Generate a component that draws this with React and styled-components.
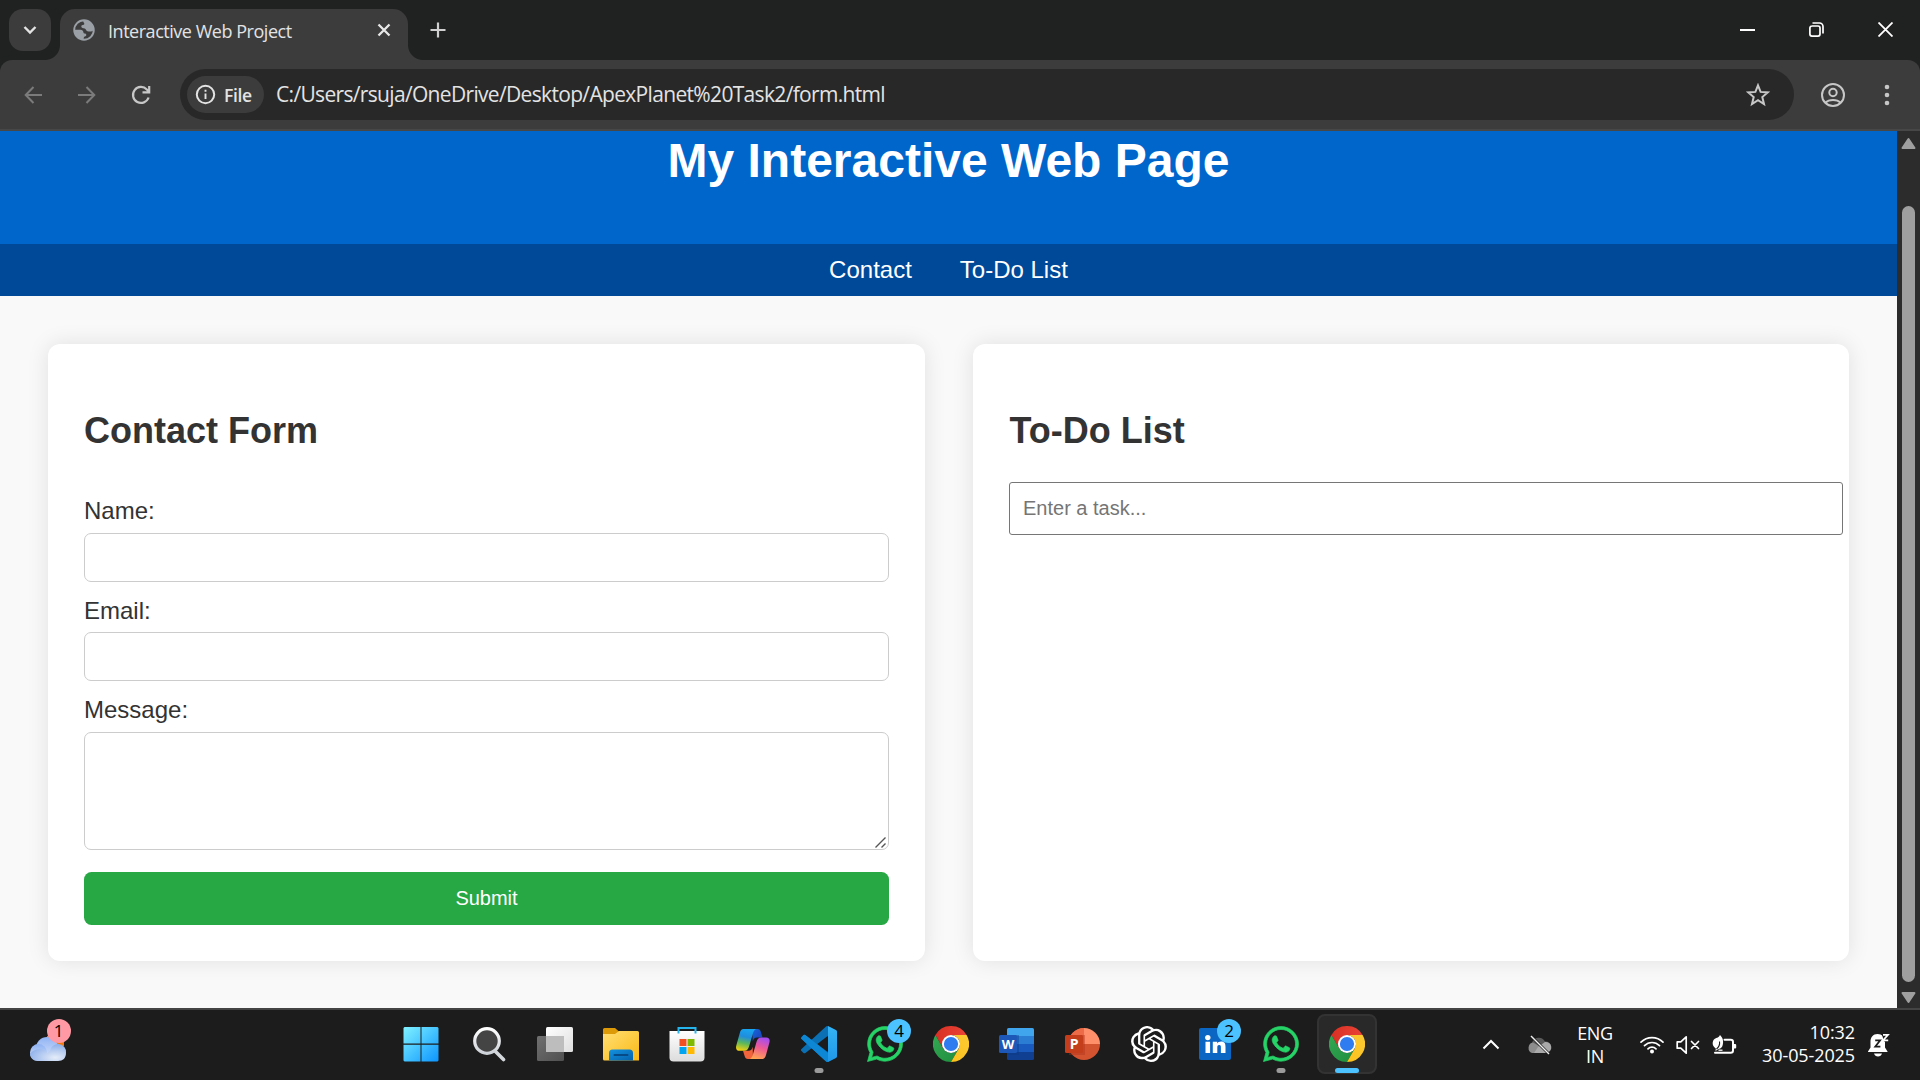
import React from "react";
import styled, { createGlobalStyle, css } from "styled-components";
import { FaWhatsapp } from "react-icons/fa";
import { SiOpenai } from "react-icons/si";

const UI = `"Open Sans", "Noto Sans", sans-serif`;
const ARIAL = `"Liberation Sans", Arial, sans-serif`;

const GlobalStyle = createGlobalStyle`
  *, *::before, *::after { box-sizing: border-box; }
  html, body { margin: 0; background: #202221; overflow: hidden; }
  svg { display: block; flex: none; }
`;

const Screen = styled.div`
  width: 1920px;
  height: 1080px;
  display: flex;
  flex-direction: column;
  background: #202221;
  font-family: ${UI};
  overflow: hidden;
`;

/* ---------- tab strip ---------- */
const TabStrip = styled.div`
  height: 60px;
  display: flex;
  align-items: flex-start;
  padding: 9px 0 0 9px;
`;
const TabSearch = styled.div`
  width: 42px;
  height: 42px;
  border-radius: 14px;
  background: #3c3c3c;
  display: grid;
  place-items: center;
`;
const Tab = styled.div`
  position: relative;
  width: 348px;
  height: 51px;
  margin-left: 9px;
  padding: 0 12px 9px 13px;
  border-radius: 15px 15px 0 0;
  background: #3c3c3c;
  display: flex;
  align-items: center;
  &::before, &::after {
    content: "";
    position: absolute;
    bottom: 0;
    width: 15px;
    height: 15px;
  }
  &::before {
    left: -15px;
    background: radial-gradient(circle at 0 0, transparent 14.5px, #3c3c3c 15.5px);
  }
  &::after {
    right: -15px;
    background: radial-gradient(circle at 100% 0, transparent 14.5px, #3c3c3c 15.5px);
  }
`;
const TabTitle = styled.span`
  flex: 1;
  margin: 2px 0 0 13px;
  font-size: 18px;
  line-height: 24px;
  letter-spacing: -0.47px;
  white-space: nowrap;
  color: #e3e3e3;
`;
const NewTab = styled.div`
  width: 42px;
  height: 42px;
  margin-left: 9px;
  display: grid;
  place-items: center;
`;
const WindowButtons = styled.div`
  display: flex;
  margin: -9px 0 0 auto;
`;
const WindowButton = styled.div`
  width: 69px;
  height: 59px;
  display: grid;
  place-items: center;
`;

/* ---------- toolbar ---------- */
const Toolbar = styled.div`
  height: 71px;
  padding: 9px 18px 9px 15px;
  border-radius: 12px 12px 0 0;
  border-bottom: 2px solid #474747;
  background: #3c3c3c;
  display: flex;
  align-items: center;
`;
const NavButton = styled.div`
  width: 36px;
  height: 42px;
  margin-right: ${(p) => p.$gap}px;
  display: grid;
  place-items: center;
`;
const Omnibox = styled.div`
  flex: 1;
  height: 51px;
  padding: 0 24px 0 7px;
  border-radius: 26px;
  background: #282828;
  display: flex;
  align-items: center;
`;
const SchemeChip = styled.div`
  width: 77px;
  height: 37px;
  padding-left: 8px;
  border-radius: 19px;
  background: #3c3c3c;
  display: flex;
  align-items: center;
  gap: 8px;
  font-size: 17.5px;
  font-weight: 600;
  letter-spacing: -0.4px;
  color: #e3e3e3;
`;
const Url = styled.span`
  flex: 1;
  margin-left: 12px;
  padding-bottom: 1px;
  font-size: 21px;
  letter-spacing: -0.67px;
  white-space: nowrap;
  color: #e3e3e3;
`;
const ToolbarIcon = styled.div`
  width: ${(p) => p.$w}px;
  display: grid;
  place-items: center;
`;

/* ---------- page ---------- */
const Viewport = styled.div`
  height: 877px;
  display: flex;
  background: #f9f9f9;
`;
const Page = styled.div`
  width: 1897px;
  font-family: ${ARIAL};
  color: #333;
`;
const Header = styled.header`
  height: 113px;
  background: #0066cc;
  text-align: center;
`;
const Title = styled.h1`
  margin: 0;
  padding-top: 2px;
  font-size: 48px;
  line-height: 55px;
  color: #fff;
`;
const Nav = styled.nav`
  height: 52px;
  background: #004999;
  display: flex;
  justify-content: center;
  gap: 48px;
`;
const NavLink = styled.a`
  padding-top: 12px;
  font-size: 24px;
  line-height: 27px;
  color: #fff;
`;
const Main = styled.main`
  display: grid;
  grid-template-columns: 877px 876px;
  gap: 48px;
  padding: 48px;
`;
const Card = styled.section`
  height: 617px;
  min-width: 0;
  padding: 36px;
  border-radius: 12px;
  background: #fff;
  box-shadow: 0 0 22px rgba(0, 0, 0, 0.1);
`;
const CardTitle = styled.h2`
  margin: 30px 0 31px;
  padding-left: ${(p) => p.$inset || 0}px;
  font-size: 36px;
  line-height: 41px;
`;
const Form = styled.form`
  display: flex;
  flex-direction: column;
  padding-top: 15.4px;
`;
const Label = styled.label`
  height: 35.5px;
  font-size: 24px;
  line-height: 27px;
`;
const fieldBox = css`
  display: block;
  width: 100%;
  border: 1px solid #ccc;
  border-radius: 7px;
  background: #fff;
  outline: none;
`;
const Field = styled.input`
  ${fieldBox}
  height: 49px;
  margin: 0 0 15px;
`;
const AreaWrap = styled.div`
  position: relative;
  height: 118px;
`;
const Area = styled.textarea`
  ${fieldBox}
  height: 118px;
  resize: none;
`;
const Grip = styled.svg`
  position: absolute;
  right: 3px;
  bottom: 2px;
`;
const Submit = styled.button`
  height: 53px;
  margin: 22px 0 0;
  border: 0;
  border-radius: 7.5px;
  background: #28a745;
  color: #fff;
  font: 20px ${ARIAL};
`;
const TaskInput = styled.input`
  display: block;
  width: 834px;
  height: 53px;
  padding: 0 13px;
  border: 1px solid #767676;
  border-radius: 3px;
  outline: none;
  font: 20px ${ARIAL};
  &::placeholder { color: #757575; opacity: 1; }
`;
const Scrollbar = styled.div`
  width: 23px;
  padding: 6px 0 3px;
  background: #2c2c2c;
  display: flex;
  flex-direction: column;
  align-items: center;
`;
const Thumb = styled.div`
  width: 13px;
  height: 776px;
  margin: 56px 0 9px;
  border-radius: 7px;
  background: #9f9f9f;
`;

/* ---------- taskbar ---------- */
const Taskbar = styled.div`
  height: 72px;
  border-top: 2px solid #444;
  background: #1c1c1c;
  display: flex;
`;
const Widgets = styled.div`
  width: 390px;
  padding: 17px 0 0 30px;
`;
const IconWrap = styled.div`
  position: relative;
  width: 36px;
  height: 36px;
`;
const Badge = styled.span`
  position: absolute;
  left: ${(p) => p.$x}px;
  top: ${(p) => p.$y}px;
  width: 24px;
  height: 24px;
  border-radius: 50%;
  background: ${(p) => p.$color};
  color: #000;
  font-size: 17px;
  line-height: 24px;
  text-align: center;
`;
const Apps = styled.div`
  display: flex;
  padding-top: 4px;
`;
const AppCell = styled.div`
  position: relative;
  width: 60px;
  height: 60px;
  margin: 0 3px;
  border-radius: 8px;
  display: grid;
  place-items: center;
  &:first-child { margin: 0 5px 0 1px; }
  ${(p) => p.$active && css`
    background: #292929;
    border: 2px solid #333;
  `}
`;
const Running = styled.i`
  position: absolute;
  left: 50%;
  bottom: ${(p) => (p.$active ? -1 : 1)}px;
  width: ${(p) => (p.$active ? 24 : 9)}px;
  height: 5px;
  border-radius: 3px;
  transform: translateX(-50%);
  background: ${(p) => (p.$active ? "#4cc2ff" : "#9a9a9a")};
`;
const WhatsAppIcon = styled(FaWhatsapp)`
  width: 40px;
  height: 40px;
  margin: -2px -2.5px;
  color: #25d366;
  stroke: #25d366;
  stroke-width: 9px;
`;
const Tray = styled.div`
  flex: 1;
  height: 69px;
  display: flex;
  align-items: center;
  padding-left: 102px;
  color: #fff;
  font-size: 18px;
  line-height: 23.5px;
`;
const TrayIcon = styled.div`
  width: ${(p) => p.$w}px;
  margin-right: ${(p) => p.$gap}px;
  display: grid;
  place-items: center;
`;
const Language = styled.div`
  width: 36px;
  margin-right: 27px;
  text-align: center;
  letter-spacing: -0.4px;
  padding-top: 1px;
`;
const Clock = styled.div`
  width: 117px;
  text-align: right;
  letter-spacing: -0.1px;
  margin-right: 13px;
  padding-bottom: 1px;
`;

const Line = ({ w, h, d, color = "#fff", sw = 2, ...rest }) => (
  <svg width={w} height={h} viewBox={`0 0 ${w} ${h}`} fill="none" stroke={color} strokeWidth={sw} {...rest}>
    <path d={d} />
  </svg>
);

const Globe = () => (
  <svg width="22" height="22" viewBox="0 0 22 22">
    <circle cx="11" cy="11" r="9.8" fill="#3c3c3c" stroke="#9aa0a6" strokeWidth="1.9" />
    <path fill="#9aa0a6" d="M10.500 1C16 .800 20.500 5.500 20.800 11c-1.600 1.600-4 2-6.300 1.200-1.500-.500-1.600-2.200-2.800-2.700-1.500-.600-3.200-.300-3.400-1.700-.200-1.500 1.200-1.700 2.400-2 .700-.300.800-1.200.300-1.900-.600-.900-1.200-1.800-.5-2.900z" />
    <path fill="#9aa0a6" d="M1.200 10.800h6.300c1.800 0 2.700.900 2.900 2.500.1.900.6 1.200 1.500 1.200 1.200.1 1.500.900 1.300 1.900-.200.800-1.300.900-1.900 1.400-.700.700-.400 1.900-.900 3C5.500 20.500 1.500 16 1.200 10.800z" />
  </svg>
);

const Weather = () => (
  <svg width="38" height="36" viewBox="0 0 38 36">
    <defs>
      <linearGradient id="cl1" x1="0" y1="0" x2="0" y2="1"><stop stopColor="#8fb2f5" /><stop offset="1" stopColor="#d8e4f8" /></linearGradient>
      <radialGradient id="cl2" cx=".7" cy=".8" r=".8"><stop stopColor="#e4ecf8" /><stop offset="1" stopColor="#8caeea" /></radialGradient>
    </defs>
    <path d="M17 9h17v10H17z" fill="#f47a10" />
    <circle cx="17" cy="21" r="11" fill="url(#cl1)" />
    <circle cx="8.500" cy="25.500" r="8.500" fill="url(#cl1)" />
    <path d="M20 24a8 8 0 0 1 16 2c0 5-3 8-8 8H8c-5 0-8-3.500-8-7 4-6 14-6 17-1z" fill="url(#cl2)" />
  </svg>
);

const WindowsLogo = () => (
  <svg width="36" height="36" viewBox="0 0 36 36">
    <defs>
      <linearGradient id="win" gradientUnits="userSpaceOnUse" x1="0" y1="0" x2="36" y2="36">
        <stop stopColor="#84f4ff" /><stop offset=".5" stopColor="#46c4ff" /><stop offset="1" stopColor="#0b93ff" />
      </linearGradient>
    </defs>
    <path fill="url(#win)" d="M1.500 1H17.500V17.500H.500V2zM18.500 1H34.500L35.500 2V17.500H18.500zM.500 18.700H17.500V35.500H1.500L.500 34.500zM18.500 18.700H35.500V34.500L34.500 35.500H18.500z" />
  </svg>
);

const SearchIcon = () => (
  <svg width="36" height="36" viewBox="0 0 36 36">
    <defs><linearGradient id="sr" x1="0" y1="0" x2="0" y2="1"><stop stopColor="#fff" /><stop offset="1" stopColor="#cdd2d8" /></linearGradient></defs>
    <path d="M23 24L32.500 33.500" stroke="#d4d8dc" strokeWidth="3.600" strokeLinecap="round" />
    <circle cx="16" cy="15" r="12.300" fill="#444" stroke="url(#sr)" strokeWidth="3.200" />
  </svg>
);

const TaskView = () => (
  <svg width="36" height="36" viewBox="0 0 36 36">
    <defs>
      <linearGradient id="tv1" x1="0" y1="0" x2="1" y2="1"><stop stopColor="#fff" /><stop offset="1" stopColor="#dedede" /></linearGradient>
      <linearGradient id="tv2" x1="0" y1="0" x2="1" y2="1"><stop stopColor="#707070" /><stop offset="1" stopColor="#505050" /></linearGradient>
    </defs>
    <rect x="0" y="10" width="27" height="25" rx="1.500" fill="url(#tv2)" />
    <rect x="9" y="1" width="27" height="25" rx="1.500" fill="url(#tv1)" />
    <path d="M9 10h18v16H10.500a1.500 1.500 0 0 1-1.500-1.500z" fill="#bdbdbd" />
  </svg>
);

const Explorer = () => (
  <svg width="36" height="36" viewBox="0 0 36 36">
    <defs>
      <linearGradient id="ex1" x1="0" y1="0" x2="1" y2="1"><stop stopColor="#ffdf74" /><stop offset="1" stopColor="#fbb915" /></linearGradient>
      <linearGradient id="ex2" x1="0" y1="0" x2="1" y2="1"><stop stopColor="#1492e0" /><stop offset="1" stopColor="#0562ac" /></linearGradient>
    </defs>
    <path d="M0 3.500A1.500 1.500 0 0 1 1.500 2H12l4 3.500V9H0z" fill="#dd9a08" />
    <path d="M0 8h12l4-3h18.500A1.500 1.500 0 0 1 36 6.500V34.500H1.500A1.500 1.500 0 0 1 0 33z" fill="url(#ex1)" />
    <path d="M6 34.500V27a3.500 3.500 0 0 1 3.500-3.500h17A3.500 3.500 0 0 1 30 27v7.500z" fill="url(#ex2)" />
    <path d="M11.500 29h13" stroke="#064a87" strokeWidth="2" strokeLinecap="round" />
  </svg>
);

const Store = () => (
  <svg width="36" height="36" viewBox="0 0 36 36">
    <defs><linearGradient id="st" x1="0" y1="0" x2="0" y2="1"><stop stopColor="#fff" /><stop offset="1" stopColor="#dcdcdc" /></linearGradient></defs>
    <path d="M.500 5h35v26.500a4 4 0 0 1-4 4h-27a4 4 0 0 1-4-4z" fill="url(#st)" />
    <path d="M9.500 7.500V2h17v5.500" fill="none" stroke="#25b4ec" strokeWidth="2" />
    <path d="M10.500 13h7v7h-7z" fill="#f25022" /><path d="M18.500 13h7v7h-7z" fill="#7fba00" />
    <path d="M10.500 21h7v7h-7z" fill="#00a4ef" /><path d="M18.500 21h7v7h-7z" fill="#ffb900" />
  </svg>
);

const Copilot = () => (
  <svg width="36" height="36" viewBox="0 0 36 36">
    <defs>
      <linearGradient id="cp1" x1=".5" y1="0" x2=".3" y2="1"><stop stopColor="#18a4f0" /><stop offset=".35" stopColor="#1f8ddc" /><stop offset=".65" stopColor="#5cb85a" /><stop offset="1" stopColor="#f5d010" /></linearGradient>
      <linearGradient id="cp2" x1=".6" y1="0" x2=".3" y2="1"><stop stopColor="#a64df0" /><stop offset=".45" stopColor="#ee5a94" /><stop offset="1" stopColor="#ffa650" /></linearGradient>
      <linearGradient id="cp3" x1="0" y1="0" x2="1" y2="1"><stop stopColor="#1767d8" /><stop offset="1" stopColor="#1a3bb8" /></linearGradient>
    </defs>
    <path d="M17 3h5.500c2 0 2.800 1.300 3.400 3l1.600 5.500H22c-2.500 0-3.500 1.500-4.200 4z" fill="url(#cp3)" />
    <path d="M18 33h-5c-2 0-2.800-1.200-3.400-3L8 24.800h5.500c2.500 0 3.500-1.500 4.200-4z" fill="#f2643c" />
    <path d="M8.500 3h13c-2 .4-2.800 2-3.500 4.200L14.200 20c-.9 3-2 4.800-4.700 4.800H4.500C1.500 24.800.5 22.500 1.300 19.500L4.800 7C5.500 4.500 6.500 3 8.500 3z" fill="url(#cp1)" />
    <path d="M27.200 33H14.500c1.800-.4 2.600-2 3.300-4.200L21.500 16c.9-3 2-4.500 4.700-4.500h5c3 0 4 2.200 3.200 5L31 29c-.8 2.500-1.800 4-3.800 4z" fill="url(#cp2)" />
  </svg>
);

const VSCode = () => (
  <svg width="36" height="36" viewBox="0 0 24 24">
    <defs>
      <linearGradient id="vs1" x1="0" y1="0" x2="0" y2="1"><stop stopColor="#35b4f5" /><stop offset="1" stopColor="#1f97e8" /></linearGradient>
      <clipPath id="vsc"><path d="M23.150 2.587L18.210.210a1.494 1.494 0 0 0-1.705.290l-9.460 8.630-4.120-3.128a.999.999 0 0 0-1.276.057L.327 7.261A1 1 0 0 0 .326 8.740L3.899 12 .326 15.260a1 1 0 0 0 .001 1.479L1.650 17.940a.999.999 0 0 0 1.276.057l4.120-3.128 9.460 8.630a1.492 1.492 0 0 0 1.704.290l4.942-2.377A1.500 1.500 0 0 0 24 20.060V3.939a1.500 1.500 0 0 0-.850-1.352zm-5.146 14.861L10.826 12l7.178-5.448v10.896z" /></clipPath>
    </defs>
    <g clipPath="url(#vsc)">
      <path d="M0 0h24v24H0z" fill="#0b70b4" />
      <path d="M0 8.500L2 5l5 4.100L18 18v6h-1.500L3.900 12z" fill="#0d86d4" />
      <path d="M18 0h6v24h-6z" fill="url(#vs1)" />
    </g>
  </svg>
);

const Chrome = () => (
  <svg width="36" height="36" viewBox="0 0 36 36">
    <defs>
      <linearGradient id="cr" x1="0" y1="0" x2="1" y2="0"><stop stopColor="#d93025" /><stop offset="1" stopColor="#ea4335" /></linearGradient>
      <linearGradient id="cg" x1="0" y1="0" x2="1" y2="1"><stop stopColor="#34a853" /><stop offset="1" stopColor="#1e8e3e" /></linearGradient>
      <linearGradient id="cy" x1="1" y1="0" x2="0" y2="1"><stop stopColor="#fbc934" /><stop offset="1" stopColor="#fcc21c" /></linearGradient>
    </defs>
    <path d="M18 9h15.590A18 18 0 0 0 2.410 9l7.800 13.500z" fill="url(#cr)" />
    <path d="M25.790 22.500L18 36A18 18 0 0 1 2.410 9l7.800 13.500A9 9 0 0 0 25.790 22.500z" fill="url(#cg)" />
    <path d="M18 9h15.590A18 18 0 0 1 18 36l7.790-13.500A9 9 0 0 0 18 9z" fill="url(#cy)" />
    <circle cx="18" cy="18" r="9" fill="#fff" />
    <circle cx="18" cy="18" r="7.100" fill="#2f7bf0" />
  </svg>
);

const Letter = styled.text`
  font-family: ${UI};
  font-weight: 700;
  fill: #fff;
  text-anchor: middle;
`;

const Word = () => (
  <svg width="36" height="36" viewBox="0 0 36 36">
    <path d="M8 3.500A1.500 1.500 0 0 1 9.500 2h24A1.500 1.500 0 0 1 35 3.500V10H8z" fill="#41a5ee" />
    <path d="M8 10h27v8H8z" fill="#2b7cd3" />
    <path d="M8 18h27v8H8z" fill="#185abd" />
    <path d="M8 26h27v6.500a1.500 1.500 0 0 1-1.500 1.500h-24A1.500 1.500 0 0 1 8 32.500z" fill="#103f91" />
    <rect x="8" y="9" width="12" height="20" fill="#0c3880" opacity=".4" />
    <rect x="0" y="9" width="18" height="18" rx="1.500" fill="#1d57b8" />
    <Letter x="9" y="22.800" fontSize="13">W</Letter>
  </svg>
);

const PowerPoint = () => (
  <svg width="36" height="36" viewBox="0 0 36 36">
    <path d="M19 18V2A16 16 0 0 0 3 18a16 16 0 0 0 16 16 16 16 0 0 0 16-16z" fill="#d35230" />
    <path d="M19 2A16 16 0 0 0 3 18h16z" fill="#ed6c47" />
    <path d="M19 2a16 16 0 0 1 16 16H19z" fill="#ff8f6b" />
    <rect x="4" y="9" width="16" height="20" fill="#a8321a" opacity=".4" />
    <rect x="0" y="9" width="18" height="18" rx="1.500" fill="#c43e1c" />
    <Letter x="9.200" y="22.800" fontSize="14">P</Letter>
  </svg>
);

const LinkedIn = () => (
  <svg width="36" height="36" viewBox="0 0 36 36">
    <rect x="2" y="2" width="32" height="32" rx="2" fill="#0a66c2" />
    <circle cx="10.800" cy="11.600" r="2.700" fill="#fff" />
    <path d="M8.500 15.800h4.600V27H8.500zM15.800 15.800h4.400v1.600c.8-1.200 2.100-1.900 3.900-1.900 3.700 0 4.400 2.400 4.400 5.400V27h-4.600v-5.400c0-1.300 0-2.500-1.700-2.500s-1.900 1.200-1.900 2.500V27h-4.500z" fill="#fff" />
  </svg>
);

const CloudOff = () => (
  <svg width="26" height="20" viewBox="0 0 26 20">
    <path d="M6 8a7 7 0 0 1 13-1.500A5.500 5.500 0 0 1 25 12l-10 2z" fill="#5a5a5a" />
    <path d="M7 7.500a5.500 5.500 0 0 0-1 10.500h13l-6-7z" fill="#8d8d8d" />
    <path d="M12 12l7-5a5.300 5.300 0 0 1 1.500 11H8z" fill="#a9a9a9" />
    <path d="M5 1l18 18" stroke="#1c1c1c" strokeWidth="2.600" />
    <path d="M5 1l18 18" stroke="#f0f0f0" strokeWidth="1.500" />
  </svg>
);

const Wifi = () => (
  <svg width="24" height="18" viewBox="0 0 24 18" fill="none" stroke="#fff" strokeWidth="1.700" strokeLinecap="round">
    <path d="M1 6.200a15.600 15.600 0 0 1 22 0M4.500 9.600a10.600 10.600 0 0 1 15 0M8 12.800a5.700 5.700 0 0 1 8 0" />
    <circle cx="12" cy="15.500" r="2" fill="#fff" stroke="none" />
  </svg>
);

const Muted = () => (
  <svg width="24" height="20" viewBox="0 0 24 20" fill="none" stroke="#fff" strokeWidth="1.700" strokeLinejoin="round" strokeLinecap="round">
    <path d="M1.200 6.800h3.600L10.200 1.800v16.400L4.800 13.200H1.200zM15.500 6.500l7 7M22.500 6.500l-7 7" />
  </svg>
);

const Battery = () => (
  <svg width="25" height="20" viewBox="0 0 25 20" fill="none">
    <path d="M12.500 4.700h6.300a2.200 2.200 0 0 1 2.200 2.200v8.700a2.200 2.200 0 0 1-2.200 2.200H3" stroke="#fff" strokeWidth="2" strokeLinecap="round" />
    <path d="M22 9h1.200a1 1 0 0 1 1 1v2.600a1 1 0 0 1-1 1H22z" fill="#fff" />
    <path d="M8 0c3 3 3.500 6 2.800 9.500-.4 2.300-1.600 4.300-4.300 4.500L3.500 16l.3-2.500C-.500 11 .200 6 2.500 4 5 2.500 7 2.500 8 0z" fill="#fff" />
    <path d="M7.500 6.500c.6 3.500-.5 5.500-3 7.500" stroke="#1c1c1c" strokeWidth="1.100" />
    <path d="M6.500 15.200h4" stroke="#fff" strokeWidth="1.300" />
  </svg>
);

const Bell = () => (
  <svg width="22" height="24" viewBox="0 0 22 24">
    <path d="M9.500 1C5 1 2.500 4.500 2.500 8.500v6L0 18.500V19h19.500v-.5L17 14.500v-6C17 4.500 14 1 9.500 1z" fill="#fff" />
    <path d="M6 20.500h8c-.6 1.900-2 3-4 3s-3.400-1.100-4-3z" fill="#fff" />
    <path d="M13.500 0h8.500v8.500h-6z" fill="#1c1c1c" />
    <path d="M7.200 7.300h5l-5 6.400h5.200" fill="none" stroke="#1c1c1c" strokeWidth="1.700" />
    <path d="M15 1.800h5l-5 5.600h5.200" fill="none" stroke="#fff" strokeWidth="1.700" />
  </svg>
);

const apps = [
  { id: "start", icon: <WindowsLogo /> },
  { id: "search", icon: <SearchIcon /> },
  { id: "taskview", icon: <TaskView /> },
  { id: "explorer", icon: <Explorer /> },
  { id: "store", icon: <Store /> },
  { id: "copilot", icon: <Copilot /> },
  { id: "vscode", icon: <VSCode />, running: true },
  { id: "whatsapp", icon: <WhatsAppIcon />, badge: "4" },
  { id: "chrome", icon: <Chrome /> },
  { id: "word", icon: <Word /> },
  { id: "powerpoint", icon: <PowerPoint /> },
  { id: "chatgpt", icon: <SiOpenai size={36} color="#fff" /> },
  { id: "linkedin", icon: <LinkedIn />, badge: "2" },
  { id: "whatsapp-2", icon: <WhatsAppIcon />, running: true },
  { id: "chrome-active", icon: <Chrome />, running: true, active: true },
];

export default function App() {
  return (
    <Screen>
      <GlobalStyle />
      <TabStrip>
        <TabSearch><Line w={16} h={10} sw={2.4} color="#e3e3e3" d="M2.500 2L8 7.500L13.500 2" /></TabSearch>
        <Tab>
          <Globe />
          <TabTitle>Interactive Web Project</TabTitle>
          <Line w={24} h={24} sw={2.3} color="#e8e8e8" d="M6.500 6.500L17.500 17.500M17.500 6.500L6.500 17.500" />
        </Tab>
        <NewTab><Line w={16} h={16} sw={2.2} color="#d0d0d0" d="M8 .5V15.500M.5 8H15.500" /></NewTab>
        <WindowButtons>
          <WindowButton><Line w={15} h={2} sw={2} d="M0 1H15" /></WindowButton>
          <WindowButton>
            <Line w={15} h={15} sw={1.7} d="M2.800 4H9A2 2 0 0 1 11 6V12.100A2 2 0 0 1 9 14.100H2.900A2 2 0 0 1 .9 12.100V6A2 2 0 0 1 2.900 4M3.500 1H10.500A3.500 3.500 0 0 1 14 4.500V11.500" />
          </WindowButton>
          <WindowButton><Line w={15} h={15} sw={1.8} d="M.5 .5L14.500 14.500M14.500 .5L.5 14.500" /></WindowButton>
        </WindowButtons>
      </TabStrip>

      <Toolbar>
        <NavButton $gap={17}><Line w={19} h={18} sw={2} color="#7b7b7b" d="M18 9H2M9.500 1L1.700 9L9.500 17" /></NavButton>
        <NavButton $gap={19}><Line w={19} h={18} sw={2} color="#7b7b7b" d="M1 9H17M9.500 1L17.300 9L9.500 17" /></NavButton>
        <NavButton $gap={21}><Line w={20} h={20} sw={2.2} color="#c7c7c7" d="M17.600 12.500A8 8 0 1 1 15.800 4.400L18 6.700M18.200 1V7.300H11.500" /></NavButton>
        <Omnibox>
          <SchemeChip>
            <svg width="21" height="21" viewBox="0 0 21 21" fill="none" stroke="#e3e3e3">
              <circle cx="10.500" cy="10.500" r="8.700" strokeWidth="2" />
              <path d="M10.500 9.500V15M10.500 5.700V7.800" strokeWidth="1.900" />
            </svg>
            File
          </SchemeChip>
          <Url>C:/Users/rsuja/OneDrive/Desktop/ApexPlanet%20Task2/form.html</Url>
          <Line w={24} h={24} sw={2} color="#c7c7c7" d="M12 2.300L14.600 8.900L21.800 9.400L16.300 14L18 21L12 17.200L6 21L7.700 14L2.200 9.400L9.400 8.900Z" />
        </Omnibox>
        <ToolbarIcon $w={78}>
          <svg width="24" height="24" viewBox="0 0 24 24" fill="none" stroke="#c7c7c7" strokeWidth="2">
            <circle cx="12" cy="12" r="11" /><circle cx="12" cy="9.500" r="3.700" /><path d="M4.500 19.500C8 16 16 16 19.500 19.500" />
          </svg>
        </ToolbarIcon>
        <ToolbarIcon $w={30}>
          <svg width="6" height="22" viewBox="0 0 6 22" fill="#c7c7c7"><circle cx="3" cy="3" r="2.300" /><circle cx="3" cy="11" r="2.300" /><circle cx="3" cy="19" r="2.300" /></svg>
        </ToolbarIcon>
      </Toolbar>

      <Viewport>
        <Page>
          <Header><Title>My Interactive Web Page</Title></Header>
          <Nav>
            <NavLink>Contact</NavLink>
            <NavLink>To-Do List</NavLink>
          </Nav>
          <Main>
            <Card>
              <CardTitle>Contact Form</CardTitle>
              <Form>
                <Label>Name:</Label>
                <Field type="text" />
                <Label>Email:</Label>
                <Field type="email" />
                <Label>Message:</Label>
                <AreaWrap>
                  <Area />
                  <Grip width="11" height="11" viewBox="0 0 11 11" fill="none" stroke="#555" strokeWidth="1.400">
                    <path d="M.5 10.500L10.500 .5M6.500 10.500L10.500 6.500" />
                  </Grip>
                </AreaWrap>
                <Submit type="button">Submit</Submit>
              </Form>
            </Card>
            <Card>
              <CardTitle $inset={0.5}>To-Do List</CardTitle>
              <TaskInput placeholder="Enter a task..." />
            </Card>
          </Main>
        </Page>
        <Scrollbar>
          <svg width="15" height="13" viewBox="0 0 15 13"><path d="M7.500 2L13.500 11H1.500Z" fill="#9f9f9f" stroke="#9f9f9f" strokeWidth="2" strokeLinejoin="round" /></svg>
          <Thumb />
          <svg width="15" height="13" viewBox="0 0 15 13"><path d="M7.500 11L13.500 2H1.500Z" fill="#9f9f9f" stroke="#9f9f9f" strokeWidth="2" strokeLinejoin="round" /></svg>
        </Scrollbar>
      </Viewport>

      <Taskbar>
        <Widgets>
          <IconWrap>
            <Weather />
            <Badge $x={16.5} $y={-8.5} $color="#ff99a4">1</Badge>
          </IconWrap>
        </Widgets>
        <Apps>
          {apps.map((a) => (
            <AppCell key={a.id} $active={a.active}>
              <IconWrap>
                {a.icon}
                {a.badge && <Badge $x={20} $y={-7} $color="#4cc2ff">{a.badge}</Badge>}
              </IconWrap>
              {a.running && <Running $active={a.active} />}
            </AppCell>
          ))}
        </Apps>
        <Tray>
          <TrayIcon $w={18} $gap={26}><Line w={18} h={11} sw={2} d="M1.500 9.500L9 2L16.500 9.500" /></TrayIcon>
          <TrayIcon $w={26} $gap={25}><CloudOff /></TrayIcon>
          <Language>ENG<br />IN</Language>
          <TrayIcon $w={24} $gap={12}><Wifi /></TrayIcon>
          <TrayIcon $w={24} $gap={12}><Muted /></TrayIcon>
          <TrayIcon $w={25} $gap={1}><Battery /></TrayIcon>
          <Clock>10:32<br />30-05-2025</Clock>
          <TrayIcon $w={22} $gap={0}><Bell /></TrayIcon>
        </Tray>
      </Taskbar>
    </Screen>
  );
}
